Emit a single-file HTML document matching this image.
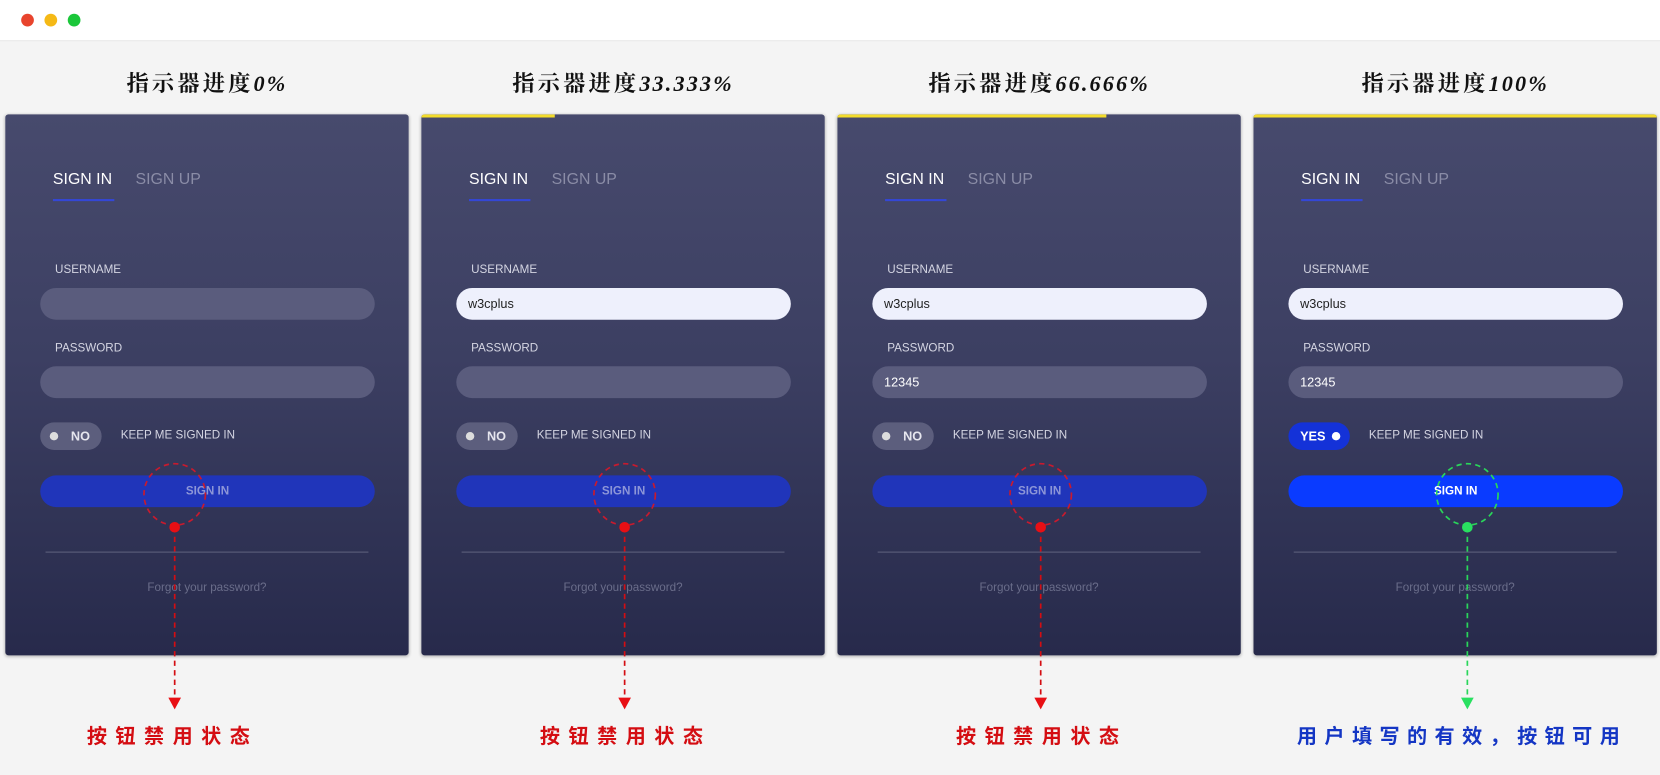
<!DOCTYPE html>
<html><head><meta charset="utf-8"><style>
html,body{margin:0;padding:0;width:1660px;height:775px;overflow:hidden;background:#f4f4f4}
#w{position:absolute;left:0;top:0;width:1568px;height:732px;transform:scale(1.0587);transform-origin:0 0;font-family:"Liberation Sans","Noto Sans CJK SC",sans-serif}
.top{position:absolute;left:0;top:0;width:1568px;height:38px;background:#fff;border-bottom:1px solid #e6e6e6}
.dot{position:absolute;top:13px;width:12px;height:12px;border-radius:50%}
.title{position:absolute;top:63px;width:381px;text-align:center;font-size:21px;letter-spacing:3px;font-weight:bold;color:#111;font-family:"Liberation Serif","Noto Serif CJK SC",serif}
.title i{font-family:"Liberation Serif",serif;letter-spacing:2px}
.card{position:absolute;top:108px;width:381px;height:511px;background:linear-gradient(#474a6d,#3c3f62 45%,#272a4b);border-radius:3px;box-shadow:0 1px 3px rgba(0,0,0,.3);overflow:hidden}
.bar{position:absolute;left:0;top:0;height:3px;background:#f3dc2b}
.t{position:absolute;color:#fff;white-space:nowrap}
.tab1{left:45px;font-size:15px}
.tab2{left:123px;font-size:15px;color:#8a8ca6}
.ul{position:absolute;left:45px;width:58px;height:2px;background:#3447d6}
.lbl{font-size:11px;color:#d4d5e2}
.inp{position:absolute;left:33px;width:316px;height:30px;border-radius:15px;background:#5a5c7d}
.inp.f{background:#eef0fc}
.inp span{position:absolute;left:11px;top:8px;font-size:12px;color:#222}
.inp.p span{color:#fff}
.tg{position:absolute;left:33px;top:291px;width:58px;height:26px;border-radius:13px;background:#5c5e7d}
.btn{position:absolute;left:33px;top:341px;width:316px;height:30px;border-radius:15px;background:#2035ba;text-align:center;line-height:30px;font-size:11px;font-weight:bold;color:#8d96d8}
.hr{position:absolute;left:38px;top:413px;width:305px;height:1px;background:#5d607c}
.fg{position:absolute;left:0;width:381px;top:441px;text-align:center;font-size:11px;color:#6a6d8a}
.cap{position:absolute;top:681px;font-size:19px;letter-spacing:8px;font-weight:bold;color:#d40d12;white-space:nowrap}
</style></head><body><div id="w">
<div class="top"></div>
<div class="dot" style="left:20px;background:#e8442d"></div>
<div class="dot" style="left:42px;background:#f5b916"></div>
<div class="dot" style="left:64px;background:#1bc73a"></div>

<div class="title" style="left:5px">指示器进度<i>0%</i></div>
<div class="title" style="left:398px">指示器进度<i>33.333%</i></div>
<div class="title" style="left:791px">指示器进度<i>66.666%</i></div>
<div class="title" style="left:1184px">指示器进度<i>100%</i></div>

<div class="card" style="left:5px">
<div class="t tab1" style="top:53px">SIGN IN</div><div class="t tab2" style="top:53px">SIGN UP</div><div class="ul" style="top:80px"></div>
<div class="t lbl" style="left:47px;top:141px">USERNAME</div>
<div class="inp" style="top:164px"></div>
<div class="t lbl" style="left:47px;top:215px">PASSWORD</div>
<div class="inp" style="top:238px"></div>
<div class="tg"><div style="position:absolute;left:9px;top:9px;width:8px;height:8px;border-radius:50%;background:#ddd"></div><div class="t" style="left:29px;top:6px;font-size:12px;font-weight:bold;color:#e6e6ee">NO</div></div>
<div class="t lbl" style="left:109px;top:297px;font-size:11px">KEEP ME SIGNED IN</div>
<div class="btn">SIGN IN</div>
<div class="hr"></div><div class="fg">Forgot your password?</div>
</div>

<div class="card" style="left:398px"><div class="bar" style="width:126px"></div>
<div class="t tab1" style="top:53px">SIGN IN</div><div class="t tab2" style="top:53px">SIGN UP</div><div class="ul" style="top:80px"></div>
<div class="t lbl" style="left:47px;top:141px">USERNAME</div>
<div class="inp f" style="top:164px"><span>w3cplus</span></div>
<div class="t lbl" style="left:47px;top:215px">PASSWORD</div>
<div class="inp" style="top:238px"></div>
<div class="tg"><div style="position:absolute;left:9px;top:9px;width:8px;height:8px;border-radius:50%;background:#ddd"></div><div class="t" style="left:29px;top:6px;font-size:12px;font-weight:bold;color:#e6e6ee">NO</div></div>
<div class="t lbl" style="left:109px;top:297px;font-size:11px">KEEP ME SIGNED IN</div>
<div class="btn">SIGN IN</div>
<div class="hr"></div><div class="fg">Forgot your password?</div>
</div>

<div class="card" style="left:791px"><div class="bar" style="width:254px"></div>
<div class="t tab1" style="top:53px">SIGN IN</div><div class="t tab2" style="top:53px">SIGN UP</div><div class="ul" style="top:80px"></div>
<div class="t lbl" style="left:47px;top:141px">USERNAME</div>
<div class="inp f" style="top:164px"><span>w3cplus</span></div>
<div class="t lbl" style="left:47px;top:215px">PASSWORD</div>
<div class="inp p" style="top:238px"><span>12345</span></div>
<div class="tg"><div style="position:absolute;left:9px;top:9px;width:8px;height:8px;border-radius:50%;background:#ddd"></div><div class="t" style="left:29px;top:6px;font-size:12px;font-weight:bold;color:#e6e6ee">NO</div></div>
<div class="t lbl" style="left:109px;top:297px;font-size:11px">KEEP ME SIGNED IN</div>
<div class="btn">SIGN IN</div>
<div class="hr"></div><div class="fg">Forgot your password?</div>
</div>

<div class="card" style="left:1184px"><div class="bar" style="width:381px"></div>
<div class="t tab1" style="top:53px">SIGN IN</div><div class="t tab2" style="top:53px">SIGN UP</div><div class="ul" style="top:80px"></div>
<div class="t lbl" style="left:47px;top:141px">USERNAME</div>
<div class="inp f" style="top:164px"><span>w3cplus</span></div>
<div class="t lbl" style="left:47px;top:215px">PASSWORD</div>
<div class="inp p" style="top:238px"><span>12345</span></div>
<div class="tg" style="background:#1432d8"><div class="t" style="left:11px;top:6px;font-size:12px;font-weight:bold">YES</div><div style="position:absolute;left:41px;top:9px;width:8px;height:8px;border-radius:50%;background:#fff"></div></div>
<div class="t lbl" style="left:109px;top:297px;font-size:11px">KEEP ME SIGNED IN</div>
<div class="btn" style="background:#0a3bff;color:#fff">SIGN IN</div>
<div class="hr"></div><div class="fg">Forgot your password?</div>
</div>

<svg style="position:absolute;left:0;top:0" width="1568" height="732">
<g fill="none" stroke-width="1.6" stroke-dasharray="5,4">
<circle cx="165" cy="467" r="29" stroke="#c81a2e"/>
<circle cx="590" cy="467" r="29" stroke="#c81a2e"/>
<circle cx="983" cy="467" r="29" stroke="#c81a2e"/>
<circle cx="1386" cy="467" r="29" stroke="#29d65a"/>
<line x1="165" y1="498" x2="165" y2="660" stroke="#d40d12"/>
<line x1="590" y1="498" x2="590" y2="660" stroke="#d40d12"/>
<line x1="983" y1="498" x2="983" y2="660" stroke="#d40d12"/>
<line x1="1386" y1="498" x2="1386" y2="660" stroke="#29d65a"/>
</g>
<g fill="#e80f14"><circle cx="165" cy="498" r="5"/><circle cx="590" cy="498" r="5"/><circle cx="983" cy="498" r="5"/>
<path d="M159 659h12l-6 11z"/><path d="M584 659h12l-6 11z"/><path d="M977 659h12l-6 11z"/></g>
<g fill="#29e060"><circle cx="1386" cy="498" r="5"/><path d="M1380 659h12l-6 11z"/></g>
</svg>
<div class="cap" style="left:82px">按钮禁用状态</div>
<div class="cap" style="left:510px">按钮禁用状态</div>
<div class="cap" style="left:903px">按钮禁用状态</div>
<div class="cap" style="left:1225px;color:#1436c4;letter-spacing:7px">用户填写的有效，按钮可用</div>
</div></body></html>
